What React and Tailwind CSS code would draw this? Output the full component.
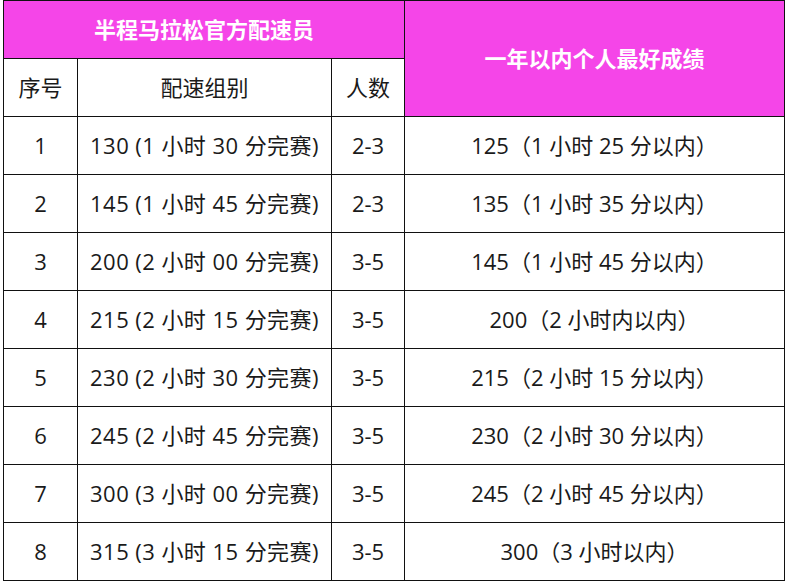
const rows = [
  ['1', '130 (1 小时 30 分完赛)', '2-3', '125（1 小时 25 分以内）'],
  ['2', '145 (1 小时 45 分完赛)', '2-3', '135（1 小时 35 分以内）'],
  ['3', '200 (2 小时 00 分完赛)', '3-5', '145（1 小时 45 分以内）'],
  ['4', '215 (2 小时 15 分完赛)', '3-5', '200（2 小时内以内）'],
  ['5', '230 (2 小时 30 分完赛)', '3-5', '215（2 小时 15 分以内）'],
  ['6', '245 (2 小时 45 分完赛)', '3-5', '230（2 小时 30 分以内）'],
  ['7', '300 (3 小时 00 分完赛)', '3-5', '245（2 小时 45 分以内）'],
  ['8', '315 (3 小时 15 分完赛)', '3-5', '300（3 小时以内）'],
]

export default function App() {
  return (
    <div
      className="w-[786px] h-[584px] bg-white pl-[3px]"
      style={{ fontFamily: '"Open Sans", "Noto Sans CJK SC", sans-serif' }}
    >
      <table className="table-fixed border-collapse w-[782px] text-[22px] text-[#1a1a1a]">
        <colgroup>
          <col className="w-[74px]" />
          <col className="w-[254px]" />
          <col className="w-[73px]" />
          <col className="w-[380px]" />
        </colgroup>
        <thead>
          <tr className="h-[58px]">
            <th
              colSpan={3}
              className="border border-[#111] bg-[#f545e8] text-white font-bold text-center p-0"
            >
              半程马拉松官方配速员
            </th>
            <th
              rowSpan={2}
              className="border border-[#111] bg-[#f545e8] text-white font-bold text-center p-0"
            >
              一年以内个人最好成绩
            </th>
          </tr>
          <tr className="h-[58px]">
            <th className="border border-[#111] font-normal text-center p-0">序号</th>
            <th className="border border-[#111] font-normal text-center p-0">配速组别</th>
            <th className="border border-[#111] font-normal text-center p-0">人数</th>
          </tr>
        </thead>
        <tbody>
          {rows.map(r => (
            <tr key={r[0]} className="h-[58px]">
              {r.map((c, i) => (
                <td
                  key={i}
                  className={`border border-[#111] text-center p-0 whitespace-nowrap ${
                    i === 1 ? 'tracking-[0.02em]' : ''
                  }`}
                >
                  {c}
                </td>
              ))}
            </tr>
          ))}
        </tbody>
      </table>
    </div>
  )
}
